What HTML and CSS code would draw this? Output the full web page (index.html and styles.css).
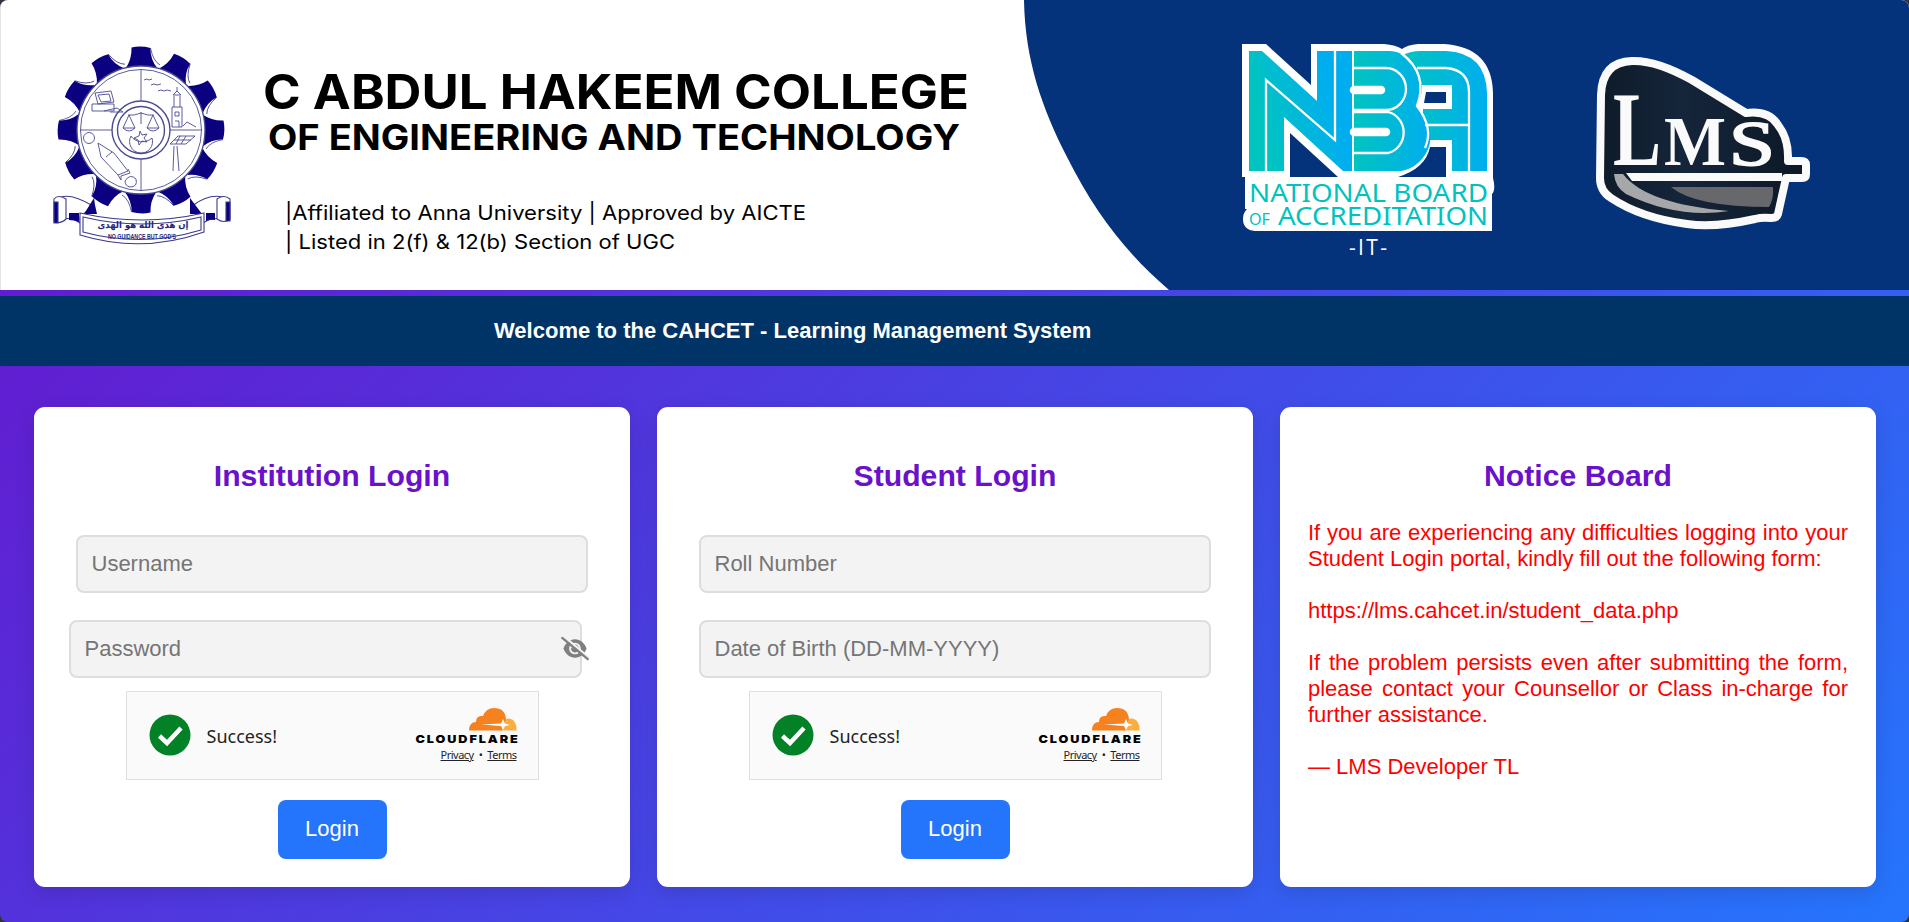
FILE: index.html
```html
<!DOCTYPE html>
<html lang="en">
<head>
<meta charset="utf-8">
<title>CAHCET - Learning Management System</title>
<link rel="stylesheet" href="styles.css">
</head>
<body>
<div class="page">
<header class="banner">
<svg class="banner-art" viewBox="0 0 1909 290" width="1909" height="290">
  <defs>
    <linearGradient id="teal" x1="0" x2="1"><stop offset="0" stop-color="#00c4c0"/><stop offset="1" stop-color="#00aeef"/></linearGradient>
    <linearGradient id="tealU" gradientUnits="userSpaceOnUse" x1="1262" y1="130" x2="1335" y2="112"><stop offset="0" stop-color="#00c4c0"/><stop offset="1" stop-color="#00aeef"/></linearGradient>
    <linearGradient id="dark" x1="0" x2="1"><stop offset="0" stop-color="#0e1b2a"/><stop offset=".4" stop-color="#15253a"/><stop offset="1" stop-color="#0c1826"/></linearGradient>
    <g id="tooth">
      <path d="M-9.500 -82.500Q0 -84.500 9.500 -82Q9 -71 16.500 -61.500Q0 -66 -15.500 -61.500Q-9 -71 -9.500 -82.500z" fill="#0b0080"/>
      <path d="M9.500 -82Q12 -69 19 -65" fill="none" stroke="#3a3a8c" stroke-width=".8"/>
    </g>
  </defs>
  <rect width="1909" height="290" fill="#fff"/>
  <path d="M0 0V290" stroke="#c8c8c8" stroke-width="1"/>
  <path d="M1024 0 C1025 60 1042 108 1067 157 C1095 213 1127 254 1169 290 H1909 V0z" fill="#05337b"/>

  <g class="crest">
    <g transform="translate(141 130)">
      <use href="#tooth"/><use href="#tooth" transform="rotate(30)"/><use href="#tooth" transform="rotate(60)"/><use href="#tooth" transform="rotate(90)"/><use href="#tooth" transform="rotate(120)"/><use href="#tooth" transform="rotate(150)"/><use href="#tooth" transform="rotate(180)"/><use href="#tooth" transform="rotate(210)"/><use href="#tooth" transform="rotate(240)"/><use href="#tooth" transform="rotate(270)"/><use href="#tooth" transform="rotate(300)"/><use href="#tooth" transform="rotate(330)"/>
    </g>
    <g fill="none" stroke="#4a4a92" stroke-width=".9">
      <circle cx="141" cy="130" r="64" fill="#fff" stroke-width="1.300"/><circle cx="141" cy="130" r="60.500"/>
      <path d="M141 70V191M80 130H202"/>
      <circle cx="141" cy="130" r="29" fill="#fff" stroke-width="1.400"/><circle cx="141" cy="130" r="23.500" stroke-width="1.400"/>
      <path d="M141 112V124M128 115Q134 116 141 113Q148 116 154 115M129 115L123 128H135zM153 115L147 128H159zM123 128Q129 134 135 128M147 128Q153 134 159 128"/>
      <path d="M131 136A11.500 11.500 0 1 0 152 138A12.500 10 0 0 1 131 136M140 131l2 4 5-1-3 4 3 4-5-1-3 4-1-5-4-2 5-2z"/>
      <path d="M95 93l16-2 3 11-16 2zM98 95l11-1 2 7-10 1zM92 104h22v7H92zM104 111l13-3 6 4-13 0"/>
      <path d="M144 80l3-1 2 1 3-1M151 85l3-1 3 1 4-1M158 91q3-2 6 0q3-2 7 0M177 87v4l-4 4h8l-4-4M174 96v11M180 96v11M172 107h10v20h-10zM175 112h4v4h-4zM175 121h4v6M183 126l4-4 9 5"/>
      <path d="M170 144l8-8h17l-9 8zM174 146l-1 25M177 146l2 25M174 140h17M180 136l-4 8M186 136l-5 8"/>
      <circle cx="89" cy="138" r="5.500"/><path d="M98 143l3 14 17 18 10-4-14-18zM106 157l6-5M118 175l3 5v-4l9-3-2-4M125 181q5-8 11-2q2 8-6 8q-5-1-5-6"/>
    </g>
    <g stroke="#3a3a8c" stroke-width="1.100" fill="#fff">
      <path d="M58 198Q70 192 93 206L80 217V223Q72 217 63 219V200z"/><path d="M227 198Q210 192 192 206L203 217V223Q212 217 222 219V200z"/>
      <path d="M54 199q4-5 12 0v20q-5 5-12 3zM217 199q7-5 13 0v20q-6 5-13 0z"/>
      <path d="M54 202h4v21h-4zM226 202h4v19h-4z" fill="#0b0080"/>
      <path d="M94 198L84 214H97L95 205zM190 198L202 214H190zM69 213h10v9q-5-2-10-2zM206 213h9v7q-5-1-9 1z" fill="#0b0080" stroke="none"/>
      <path d="M80 213Q142 227 204 213V232Q142 254 80 235z"/><path d="M83 217Q142 231 201 217V230Q142 248 83 232z" fill="none"/>
    </g>
    <g fill="#25257c" text-anchor="middle">
      <text x="143" y="228" font-family="'DejaVu Sans',sans-serif" font-size="9.500" font-weight="bold" textLength="91" lengthAdjust="spacingAndGlyphs">إن هدى الله هو الهدى</text>
      <text x="142" y="239" font-family="'Liberation Sans',sans-serif" font-size="8" font-weight="bold" textLength="68" lengthAdjust="spacingAndGlyphs">NO GUIDANCE BUT GOD'S</text>
    </g>
  </g>

  <g class="college" fill="#000">
    <text x="263" y="109" font-size="48" font-weight="700" textLength="706" lengthAdjust="spacingAndGlyphs">C ABDUL HAKEEM COLLEGE</text>
    <text x="268" y="150" font-size="35" font-weight="700" textLength="692" lengthAdjust="spacingAndGlyphs">OF ENGINEERING AND TECHNOLOGY</text>
    <text x="285" y="220" font-size="20" textLength="521" lengthAdjust="spacingAndGlyphs">|Affiliated to Anna University | Approved by AICTE</text>
    <text x="285" y="248.500" font-size="20" textLength="390" lengthAdjust="spacingAndGlyphs">| Listed in 2(f) &amp; 12(b) Section of UGC</text>
  </g>

  <g class="nba">
    <path d="M1242 44H1266L1311 85V44H1384Q1396 45 1402 49Q1407 45 1418 44H1444Q1492 47 1493 93V178Q1496 190 1492 194V231H1255Q1243 230 1243 219Q1243 213 1247 209H1245V177H1242z" fill="#fff"/>
    <path d="M1290 133L1338 177H1290zM1430 147H1446V177H1398Q1426 168 1430 147zM1426 92H1446V103H1424z" fill="#05337b"/>
    <path d="M1249 51H1262L1317 101V51H1352V171H1343L1284 117V171H1249z" fill="url(#tealU)"/>
    <path d="M1402 56Q1409 51 1421 51H1446Q1486 53 1487 93V171H1452V140H1427Q1427 133 1423 126V109H1452V85H1421Q1416 64 1402 56z" fill="url(#teal)"/>
    <path d="M1354 51H1386A34 35 0 0 1 1416 106A35 36 0 0 1 1391 171H1354z" fill="url(#teal)"/>
    <g fill="none" stroke="#fff" stroke-width="2.300">
      <path d="M1266 171V80L1335 140V51M1354 68H1386A20 21 0 0 1 1386 110H1354M1354 112H1388A20 21 0 0 1 1388 153H1354M1417 68H1446Q1469 70 1469 92V171M1425 125H1469"/>
      <path d="M1354 90H1381M1354 132H1386" stroke-width="8.500" stroke-linecap="round"/>
      <path d="M1401 53Q1429 74 1417 106Q1434 128 1425 148"/>
    </g>
    <g fill="#00c2bf" font-family="'Noto Sans','Open Sans',sans-serif">
      <text x="1249" y="202" font-size="25.500" textLength="239" lengthAdjust="spacingAndGlyphs">NATIONAL BOARD</text>
      <text x="1249" y="225" font-size="16" textLength="21" lengthAdjust="spacingAndGlyphs">OF</text>
      <text x="1278" y="225" font-size="25.500" textLength="210" lengthAdjust="spacingAndGlyphs">ACCREDITATION</text>
    </g>
    <text x="1349" y="255" font-family="'Open Sans',sans-serif" font-size="21" fill="#fff" textLength="38">-IT-</text>
  </g>

  <g class="lms">
    <path d="M1601 95Q1602 62 1632 61Q1656 60 1692 80L1746 113Q1769 110 1778 125Q1789 139 1788 161H1801Q1806 161 1806 165V174Q1806 178 1802 178H1786L1778 214Q1777 218 1771 218Q1762 217 1755 219Q1715 228 1687 224Q1641 218 1611 198Q1600 191 1600 178z" fill="url(#dark)" stroke="#fafafa" stroke-width="8" stroke-linejoin="round"/>
    <path d="M1626 173H1782V181H1632z" fill="#fafafa"/>
    <path d="M1614 174H1623Q1646 204 1729 211Q1677 219 1626 194Q1615 187 1614 174z" fill="#a6a7a8"/>
    <path d="M1671 187H1773Q1774 199 1769 207Q1695 207 1671 187z" fill="#66686c"/>
    <g fill="#fafafa" font-family="'Liberation Serif',serif">
      <text x="1613" y="165" font-size="106" font-weight="bold" textLength="48" lengthAdjust="spacingAndGlyphs">L</text>
      <text x="1664" y="165" font-size="70" font-weight="bold" textLength="62" lengthAdjust="spacingAndGlyphs">M</text>
      <text x="1729" y="165" font-size="63" stroke="#fafafa" stroke-width="1.800" textLength="46" lengthAdjust="spacingAndGlyphs">S</text>
    </g>
  </g>
</svg>
</header>
<div class="ticker"><span class="ticker-text">Welcome to the CAHCET - Learning Management System</span></div>
<main class="panels">
  <section class="card">
    <h2 class="card-title">Institution Login</h2>
    <form class="form">
      <input class="field" type="text" placeholder="Username">
      <div class="password">
        <input class="field" type="password" placeholder="Password">
        <svg class="eye" viewBox="0 0 640 512" width="28" height="23" fill="#808080"><path d="M320 45C200 45 100 130 55 256C100 382 200 467 320 467S540 382 585 256C540 130 440 45 320 45zm0 77a134 134 0 1 1 0 268a134 134 0 0 1 0-268z" fill-rule="evenodd"/><path d="M320 166a90 90 0 1 1-85 60a44 44 0 0 0 85-60z"/><path d="M75-15L650 475" stroke="#f3f3f3" stroke-width="50"/><path d="M28 15L612 497" stroke="#808080" stroke-width="54" stroke-linecap="round"/></svg>
      </div>
      <div class="turnstile">
        <svg class="check" viewBox="0 0 42 42" width="42" height="42"><circle cx="21" cy="21" r="20.500" fill="#038127"/><path d="M10.500 22L18 29L32 14" fill="none" stroke="#fff" stroke-width="4.500"/></svg>
        <span class="status">Success!</span>
        <div class="brand">
          <svg class="cloudflare" viewBox="0 0 102 36" width="102" height="36"><path d="M85 22.500L86 14Q93 8 98 12Q102 16 101.500 22.500z" fill="#fbad41"/><path d="M54 22.500Q54 14 61 14Q61 7 68 8Q71 0 79 0Q90 0 91 11Q89 16 87 22.500z" fill="#f6821f"/><path d="M66 16.500L86 15.500L88 11L90 15.500L95 17L90 18L88 22L86 18z" fill="#fff"/><text class="wordmark" transform="translate(.5 34.500) scale(1.15 1)" x="0" y="0" textLength="89">CLOUDFLARE</text></svg>
          <div class="links"><a>Privacy</a><span>•</span><a>Terms</a></div>
        </div>
      </div>
      <button class="login" type="button">Login</button>
    </form>
  </section>
  <section class="card">
    <h2 class="card-title">Student Login</h2>
    <form class="form">
      <input class="field" type="text" placeholder="Roll Number">
      <input class="field" type="text" placeholder="Date of Birth (DD-MM-YYYY)">
      <div class="turnstile">
        <svg class="check" viewBox="0 0 42 42" width="42" height="42"><circle cx="21" cy="21" r="20.500" fill="#038127"/><path d="M10.500 22L18 29L32 14" fill="none" stroke="#fff" stroke-width="4.500"/></svg>
        <span class="status">Success!</span>
        <div class="brand">
          <svg class="cloudflare" viewBox="0 0 102 36" width="102" height="36"><path d="M85 22.500L86 14Q93 8 98 12Q102 16 101.500 22.500z" fill="#fbad41"/><path d="M54 22.500Q54 14 61 14Q61 7 68 8Q71 0 79 0Q90 0 91 11Q89 16 87 22.500z" fill="#f6821f"/><path d="M66 16.500L86 15.500L88 11L90 15.500L95 17L90 18L88 22L86 18z" fill="#fff"/><text class="wordmark" transform="translate(.5 34.500) scale(1.15 1)" x="0" y="0" textLength="89">CLOUDFLARE</text></svg>
          <div class="links"><a>Privacy</a><span>•</span><a>Terms</a></div>
        </div>
      </div>
      <button class="login" type="button">Login</button>
    </form>
  </section>
  <section class="card">
    <h2 class="card-title">Notice Board</h2>
    <div class="notice">
      <p>If you are experiencing any difficulties logging into your Student Login portal, kindly fill out the following form:</p>
      <p>https://lms.cahcet.in/student_data.php</p>
      <p>If the problem persists even after submitting the form, please contact your Counsellor or Class in-charge for further assistance.</p>
      <p>— LMS Developer TL</p>
    </div>
  </section>
</main>
</div>
</body>
</html>
```
FILE: styles.css
```css
* { box-sizing: border-box; }
html { background: #333; }
body { margin: 0; font-family: "Liberation Sans", Arial, sans-serif; }
.page {
  width: 1909px;
  height: 922px;
  overflow: hidden;
  border-radius: 8px;
  background: linear-gradient(135deg, #6a11cb, #2575fc);
}
.banner, .banner-art { display: block; height: 290px; }
.college text { font-family: Inter, sans-serif; }
.ticker {
  margin-top: 6px;
  height: 70px;
  padding: 0 0 1px 494px;
  display: flex;
  align-items: center;
  background: #003366;
  color: #fff;
  font-size: 22px;
  font-weight: bold;
  white-space: nowrap;
}
.panels {
  display: grid;
  grid-template-columns: repeat(3, 596px);
  gap: 27px;
  padding: 41px 33px 35px 34px;
}
.card {
  height: 480px;
  padding: 27px;
  border-radius: 11px;
  background: #fff;
  box-shadow: 0 5px 20px rgba(0, 0, 0, .12);
}
.card-title {
  margin: 24px 0 26px;
  font-size: 30.200px;
  line-height: 35px;
  color: #6a11cb;
  text-align: center;
}
.form { display: flex; flex-direction: column; align-items: center; padding-top: 16px; }
.field {
  width: 512px;
  height: 58px;
  margin: 0 0 27px;
  padding: 0 13.500px 1px;
  border: 2px solid #ddd;
  border-radius: 8px;
  background: #f3f3f3;
  font: 22px "Liberation Sans", Arial, sans-serif;
}
.field::placeholder { color: #757575; }
.field:nth-of-type(2) { margin-bottom: 0; }
.password { position: relative; width: 526px; height: 58px; }
.password .field { width: 513px; margin: 0; }
.eye { position: absolute; right: 6px; top: 17px; overflow: visible; }
.turnstile {
  display: flex;
  align-items: center;
  width: 413px;
  height: 89px;
  margin-top: 13px;
  padding: 0 21px 1px 22px;
  border: 1px solid #e0e0e0;
  background: #fafafa;
}
.status {
  margin-left: 16px;
  padding-top: 2px;
  font-family: "Noto Sans", sans-serif;
  font-size: 18px;
  color: #232323;
}
.brand { margin-left: auto; display: flex; flex-direction: column; align-items: flex-end; }
.cloudflare { display: block; overflow: visible; }
.wordmark { font: 900 11px Inter, sans-serif; }
.links {
  display: flex;
  gap: 5px;
  margin-top: 3px;
  font: 11px/15px "Noto Sans", sans-serif;
  letter-spacing: -.5px;
  color: #232323;
}
.links a { text-decoration: underline; }
.login {
  width: 109px;
  height: 59px;
  margin: 20px 0 0;
  padding: 0 0 1px;
  border: 0;
  border-radius: 8px;
  background: #2575fc;
  color: #fff;
  font: 22px "Liberation Sans", Arial, sans-serif;
}
.notice { padding: 1px 1px 0; color: #f00; font-size: 22px; line-height: 26px; text-align: justify; }
.notice p { margin: 0 0 26px; }
```
